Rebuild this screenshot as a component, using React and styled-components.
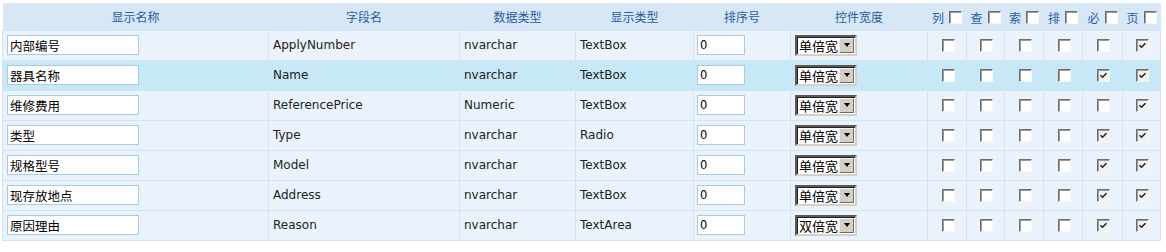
import React from "react";
import styled, { createGlobalStyle } from "styled-components";

const Global = createGlobalStyle`
  html, body { margin: 0; padding: 0; background: #ffffff; }
  body { font-family: "DejaVu Sans", Verdana, "Noto Sans CJK SC", sans-serif; }
`;

const Wrap = styled.div`
  padding: 3px 0 0 2px;
`;

const Table = styled.table`
  width: 1158px;
  table-layout: fixed;
  border-collapse: collapse;
  font-size: 12px;
  color: #222;
`;

const HeadRow = styled.tr`
  height: 27px;
  background: #d7e7f5;
`;

const Th = styled.th`
  font-family: "Noto Sans CJK SC", sans-serif;
  font-weight: normal;
  font-size: 12px;
  color: #285ea3;
  text-align: center;
  vertical-align: middle;
  padding: 0;
  white-space: nowrap;
`;

const Row = styled.tr`
  height: 30px;
  background: ${(p) => (p.$active ? "#c7e8f6" : "#eaf3fb")};
`;

const Td = styled.td`
  border: 1px solid #d3e3f1;
  padding: 0 0 0 ${(p) => p.$pad ?? 4}px;
  text-align: ${(p) => (p.$center ? "center" : "left")};
  vertical-align: middle;
  white-space: nowrap;
  font-family: "DejaVu Sans", Verdana, sans-serif;
  font-size: 12px;
  color: #222;
`;

const TextInput = styled.div`
  box-sizing: border-box;
  width: ${(p) => p.$w}px;
  height: 20px;
  border: 1px solid #a6cbe3;
  background: #fff;
  display: flex;
  align-items: center;
  padding-left: 2px;
  font-family: ${(p) =>
    p.$cjk ? `"Noto Sans CJK SC", sans-serif` : `"DejaVu Sans", Verdana, sans-serif`};
  font-size: ${(p) => (p.$cjk ? 12.5 : 11.5)}px;
  color: #000;
`;

const Select = styled.div`
  box-sizing: border-box;
  display: inline-flex;
  align-items: center;
  width: 62px;
  height: 21px;
  background: #fff;
  border-style: solid;
  border-width: 2px;
  border-color: #5a5a5a #d4d0c8 #d4d0c8 #5a5a5a;
  box-shadow: inset 1px 1px 0 #202020;
  vertical-align: middle;
`;

const SelectText = styled.span`
  flex: 1;
  font-family: "Noto Sans CJK SC", sans-serif;
  font-size: 13px;
  line-height: 17px;
  color: #000;
  padding-left: 2px;
  white-space: nowrap;
`;

const SelectBtn = styled.span`
  box-sizing: border-box;
  flex: none;
  width: 15px;
  height: 15px;
  margin-right: 1px;
  background: #d4d0c8;
  border-style: solid;
  border-width: 1px;
  border-color: #f4f2ee #6f6b64 #6f6b64 #f4f2ee;
  display: flex;
  align-items: center;
  justify-content: center;
  &::after {
    content: "";
    border-left: 3.5px solid transparent;
    border-right: 3.5px solid transparent;
    border-top: 4px solid #000;
  }
`;

const Check = styled.span`
  box-sizing: border-box;
  display: inline-flex;
  align-items: center;
  justify-content: center;
  width: 13px;
  height: 13px;
  background: ${(p) => (p.$checked ? "#f0f0f0" : "#ffffff")};
  border-style: solid;
  border-width: 1px;
  border-color: #6e6e6e #f8f8f8 #f8f8f8 #6e6e6e;
  box-shadow: inset 1px 1px 0 #9a9a9a;
  vertical-align: middle;
  margin: ${(p) => (p.$head ? "0 0 0 5px" : "0 0 0 2px")};
`;

const HeadLabel = styled.span`
  vertical-align: middle;
`;

const CheckBox = ({ checked, head }) => (
  <Check $checked={checked} $head={head}>
    {checked && (
      <svg width="9" height="9" viewBox="0 0 9 9">
        <path d="M1.5 4.2 L3.5 6.2 L7.5 2.2" fill="none" stroke="#222" strokeWidth="1.5" />
      </svg>
    )}
  </Check>
);

const rows = [
  { label: "内部编号", field: "ApplyNumber", dtype: "nvarchar", show: "TextBox", width: "单倍宽", checks: [0, 0, 0, 0, 0, 1] },
  { label: "器具名称", field: "Name", dtype: "nvarchar", show: "TextBox", width: "单倍宽", checks: [0, 0, 0, 0, 1, 1], active: true },
  { label: "维修费用", field: "ReferencePrice", dtype: "Numeric", show: "TextBox", width: "单倍宽", checks: [0, 0, 0, 0, 0, 1] },
  { label: "类型", field: "Type", dtype: "nvarchar", show: "Radio", width: "单倍宽", checks: [0, 0, 0, 0, 1, 1] },
  { label: "规格型号", field: "Model", dtype: "nvarchar", show: "TextBox", width: "单倍宽", checks: [0, 0, 0, 0, 1, 1] },
  { label: "现存放地点", field: "Address", dtype: "nvarchar", show: "TextBox", width: "单倍宽", checks: [0, 0, 0, 0, 1, 1] },
  { label: "原因理由", field: "Reason", dtype: "nvarchar", show: "TextArea", width: "双倍宽", checks: [0, 0, 0, 0, 1, 1] },
];

const colWidths = [266, 191, 116, 118, 97, 137, 39, 38, 39, 39, 40, 38];
const flagHeads = ["列", "查", "索", "排", "必", "页"];

export default function App() {
  return (
    <>
      <Global />
      <Wrap>
        <Table>
          <colgroup>
            {colWidths.map((w, i) => (
              <col key={i} style={{ width: w }} />
            ))}
          </colgroup>
          <thead>
            <HeadRow>
              <Th>显示名称</Th>
              <Th>字段名</Th>
              <Th>数据类型</Th>
              <Th>显示类型</Th>
              <Th>排序号</Th>
              <Th>控件宽度</Th>
              {flagHeads.map((h) => (
                <Th key={h}>
                  <HeadLabel>{h}</HeadLabel>
                  <CheckBox head />
                </Th>
              ))}
            </HeadRow>
          </thead>
          <tbody>
            {rows.map((r) => (
              <Row key={r.field} $active={r.active}>
                <Td>
                  <TextInput $w={132} $cjk>{r.label}</TextInput>
                </Td>
                <Td>{r.field}</Td>
                <Td>{r.dtype}</Td>
                <Td>{r.show}</Td>
                <Td $pad={3}>
                  <TextInput $w={48}>0</TextInput>
                </Td>
                <Td $pad={4}>
                  <Select>
                    <SelectText>{r.width}</SelectText>
                    <SelectBtn />
                  </Select>
                </Td>
                {r.checks.map((c, i) => (
                  <Td key={i} $center $pad={0}>
                    <CheckBox checked={!!c} />
                  </Td>
                ))}
              </Row>
            ))}
          </tbody>
        </Table>
      </Wrap>
    </>
  );
}
